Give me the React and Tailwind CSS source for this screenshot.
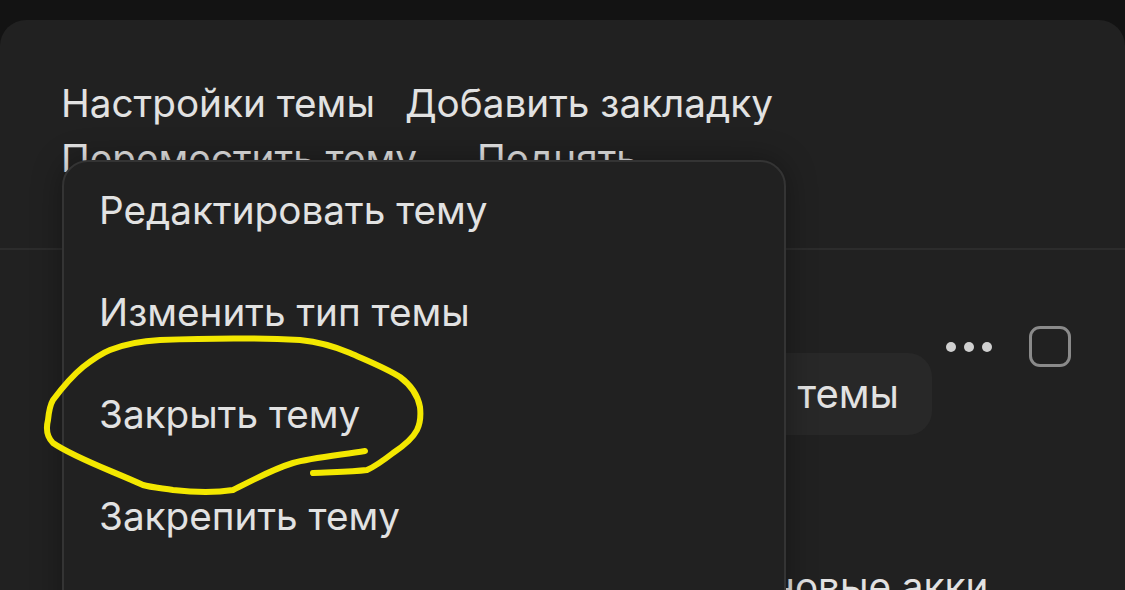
import React from 'react'

const menuItems = ['Редактировать тему', 'Изменить тип темы', 'Закрыть тему', 'Закрепить тему', 'Удалить тему']

function Annotation() {
  return (
    <svg className="absolute inset-0 pointer-events-none" width="1125" height="590" viewBox="0 0 1125 590">
      <path
        d="M365 451 C340 455 310 458 293 463 C270 470 250 482 233 490 C215 493 190 492 173 490 C160 488 150 487 143 485 C110 470 75 458 53 443 C46 436 46 428 48 420 C49 410 50 405 53 400 C62 388 72 376 83 367 C92 360 100 354 110 350 C125 344 140 341 160 340 C210 338 260 338 300 340 C320 342 336 347 350 353 C368 361 386 368 400 377 C412 386 418 396 420 407 C421 416 420 424 417 430 C412 440 402 447 393 453 C384 460 376 466 367 470 C350 472 330 472 313 473"
        fill="none"
        stroke="#f3e800"
        strokeWidth="6"
        strokeLinecap="round"
        strokeLinejoin="round"
      />
    </svg>
  )
}

export default function App() {
  return (
    <div className="relative h-[590px] w-full overflow-hidden bg-[#131313] pt-5 font-['Inter','Noto_Sans',sans-serif] text-[#e2e2e2]">
      <div className="h-full rounded-t-[26px] bg-[#212121]">
        <div className="px-[61px] pt-[56px] pb-[62px] text-[38.7px] leading-[55px]">
          <div className="flex">
            <span>Настройки темы</span>
            <span className="ml-[30px]">Добавить закладку</span>
          </div>
          <div className="flex">
            <span>Переместить тему</span>
            <span className="ml-[60px]">Поднять</span>
          </div>
        </div>
        <div className="h-[2px] bg-[#2c2c2c]" />

        <div className="flex items-start justify-end pt-[76px] pr-[54px]">
          <div className="mt-[27px] flex h-[82px] items-center rounded-[24px] bg-[#282828] px-[33px] text-[40px]">
            Фото темы
          </div>
          <div className="mt-[16px] ml-[14px] flex gap-[8px]">
            <span className="h-[10px] w-[10px] rounded-full bg-[#d0d0d0]" />
            <span className="h-[10px] w-[10px] rounded-full bg-[#d0d0d0]" />
            <span className="h-[10px] w-[10px] rounded-full bg-[#d0d0d0]" />
          </div>
          <div className="ml-[37px] h-[41px] w-[42px] rounded-[11px] border-[3px] border-[#8a8a8a]" />
        </div>
        <div className="pt-[128px] pl-[772px] text-[38.7px] leading-[46px]">новые акки</div>
      </div>

      <div className="absolute left-[62px] top-[160px] h-[480px] w-[724px] rounded-[26px] border-2 border-[#343434] bg-[#212121] shadow-[0_0_30px_rgba(0,0,0,0.35)]">
        {menuItems.map((item) => (
          <div key={item} className="flex h-[102px] items-center pb-[6px] pl-[35px] text-[38.7px]">
            {item}
          </div>
        ))}
      </div>

      <Annotation />
    </div>
  )
}
